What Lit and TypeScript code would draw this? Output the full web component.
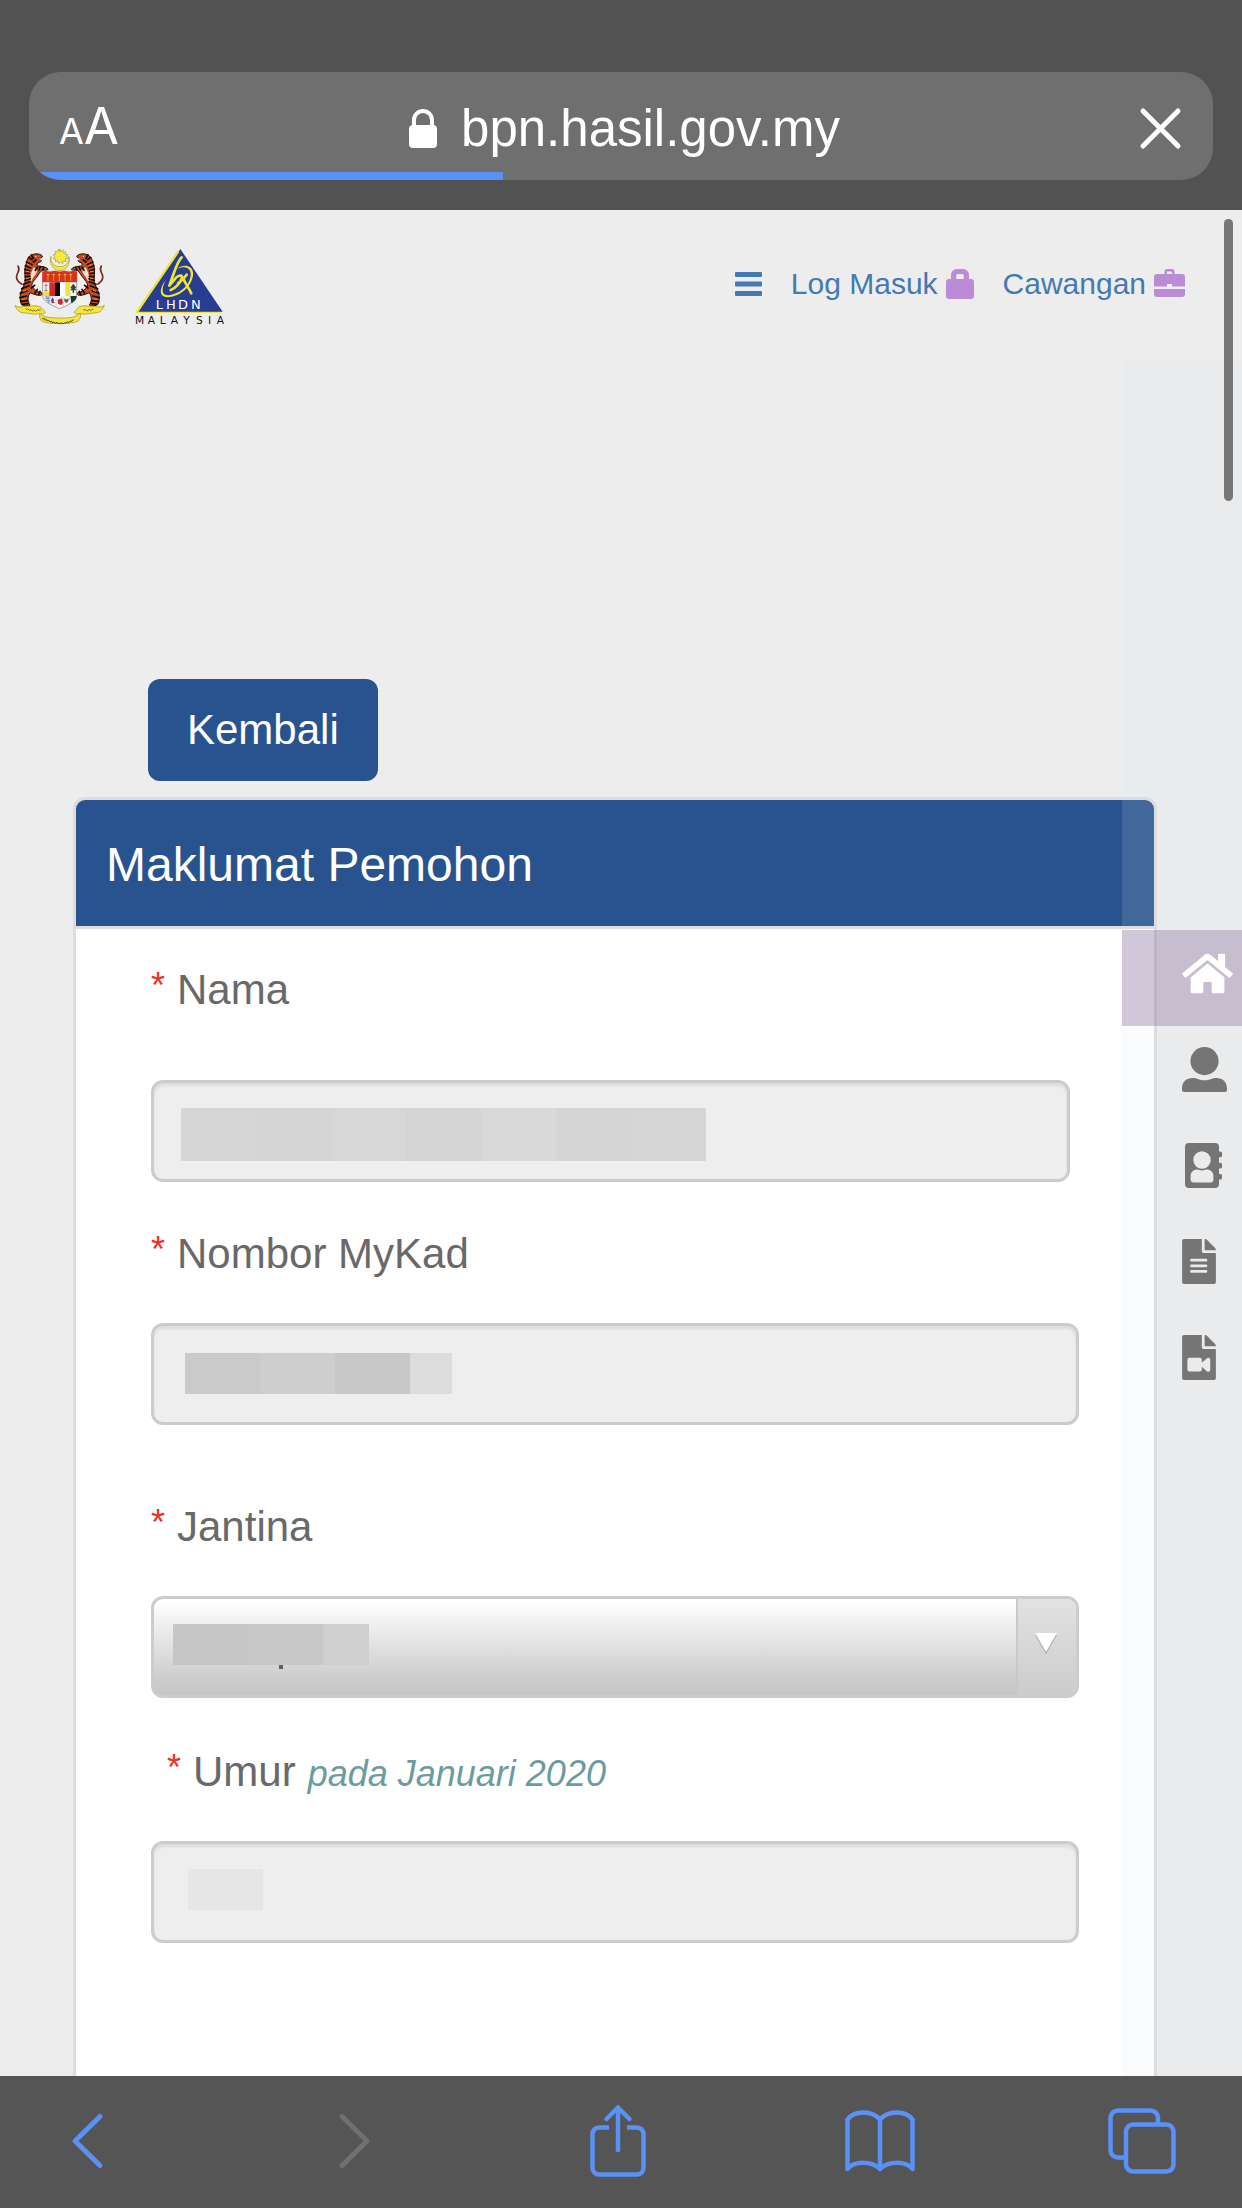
import { LitElement, html, svg, css, nothing } from "lit";
import { customElement } from "lit/decorators.js";
import { styleMap } from "lit/directives/style-map.js";

interface Mask {
  left: number;
  top: number;
  height: number;
  cells: [number, string][];
}

interface Field {
  id: string;
  label: string;
  note?: string;
  kind: "text" | "select";
  variant: string;
  mask: Mask;
}

const FIELDS: Field[] = [
  {
    id: "nama",
    label: "Nama",
    kind: "text",
    variant: "first",
    mask: {
      left: 30,
      top: 28,
      height: 53,
      cells: [
        [75, "#d6d6d6"],
        [75, "#d5d5d5"],
        [75, "#d7d7d7"],
        [75, "#d4d4d4"],
        [75, "#d9d9d9"],
        [75, "#d5d5d5"],
        [75, "#d6d6d6"],
      ],
    },
  },
  {
    id: "mykad",
    label: "Nombor MyKad",
    kind: "text",
    variant: "",
    mask: {
      left: 34,
      top: 30,
      height: 41,
      cells: [
        [75, "#cacaca"],
        [75, "#cecece"],
        [75, "#c8c8c8"],
        [42, "#dcdcdc"],
      ],
    },
  },
  {
    id: "jantina",
    label: "Jantina",
    kind: "select",
    variant: "roomy",
    mask: {
      left: 22,
      top: 28,
      height: 41,
      cells: [
        [75, "#c6c6c6"],
        [75, "#c8c8c8"],
        [46, "#cfcfcf"],
      ],
    },
  },
  {
    id: "umur",
    label: "Umur",
    note: "pada Januari 2020",
    kind: "text",
    variant: "indented",
    mask: { left: 37, top: 28, height: 41, cells: [[75, "#e6e6e6"]] },
  },
];

const FILE_SHAPE =
  "M224 136V0H24C10.7 0 0 10.7 0 24v464c0 13.3 10.7 24 24 24h336c13.3 0 24-10.7 24-24V160H248c-13.2 0-24-10.8-24-24zM256 0v128h128v-6c0-6-3-13-7-17L279 7c-4-4-11-7-17-7z";

const homeIcon = html`<svg width="51" height="45" viewBox="0 0 576 512" aria-hidden="true" fill="#fff">
  <path d="M280.37 148.26L96 300.11V464a16 16 0 0 0 16 16l112.06-.29a16 16 0 0 0 15.92-16V368a16 16 0 0 1 16-16h64a16 16 0 0 1 16 16v95.64a16 16 0 0 0 16 16.05L464 480a16 16 0 0 0 16-16V300L295.67 148.26a12.19 12.19 0 0 0-15.3 0zM571.6 251.47L488 182.56V44.05a12 12 0 0 0-12-12h-56a12 12 0 0 0-12 12v72.61L318.47 43a48 48 0 0 0-61 0L4.34 251.47a12 12 0 0 0-1.6 16.9l25.5 31A12 12 0 0 0 45.15 301l235.22-193.74a12.19 12.19 0 0 1 15.3 0L530.9 301a12 12 0 0 0 16.9-1.6l25.5-31a12 12 0 0 0-1.7-16.93z"/>
</svg>`;

const userIcon = html`<svg width="45" height="45" viewBox="0 0 45 45" aria-hidden="true" fill="#757575">
  <circle cx="22.5" cy="14.1" r="14.1"/>
  <path d="M0 41.5C0 35 4.5 31 10.5 31c5 0 6.5 2.3 12 2.3S29.500 31 34.500 31C40.500 31 45 35 45 41.500V43a2 2 0 0 1-2 2H2a2 2 0 0 1-2-2z"/>
</svg>`;

const contactIcon = html`<svg width="37" height="45" viewBox="0 0 37 45" aria-hidden="true" fill="#757575" fill-rule="evenodd">
  <path d="M4 0h26a4 4 0 0 1 4 4v4.500h1.500a1.500 1.500 0 0 1 1.500 1.500v2.700a1.500 1.500 0 0 1-1.500 1.500H34v5.500h1.500a1.500 1.500 0 0 1 1.500 1.500v2.700a1.500 1.500 0 0 1-1.500 1.500H34v5.500h1.500a1.500 1.500 0 0 1 1.500 1.500v2.700a1.500 1.500 0 0 1-1.500 1.500H34V41a4 4 0 0 1-4 4H4a4 4 0 0 1-4-4V4a4 4 0 0 1 4-4zM17 8.300a8.700 8.700 0 1 0 0 17.400a8.700 8.700 0 1 0 0-17.400zM5.600 36.500a3 3 0 0 0 3 3h16.800a3 3 0 0 0 3-3v-3.500c0-4-3-6.500-6.500-6.500c-2 0-2.500 1-4.900 1s-3-1-4.900-1c-3.500 0-6.500 2.500-6.500 6.500z"/>
</svg>`;

const fileIcon = html`<svg width="34" height="45" viewBox="0 0 384 512" aria-hidden="true" fill="#757575" fill-rule="evenodd">
  <path d="${FILE_SHAPE}M104 226h170a12 12 0 0 1 12 12v6a12 12 0 0 1-12 12H104a12 12 0 0 1-12-12v-6a12 12 0 0 1 12-12zM104 290h170a12 12 0 0 1 12 12v6a12 12 0 0 1-12 12H104a12 12 0 0 1-12-12v-6a12 12 0 0 1 12-12zM104 354h170a12 12 0 0 1 12 12v6a12 12 0 0 1-12 12H104a12 12 0 0 1-12-12v-6a12 12 0 0 1 12-12z"/>
</svg>`;

const videoIcon = html`<svg width="34" height="45" viewBox="0 0 384 512" aria-hidden="true" fill="#757575" fill-rule="evenodd">
  <path d="${FILE_SHAPE}M84 260h116a24 24 0 0 1 24 24v32l56-50c16-14 40-6 40 16v114c0 22-24 30-40 16l-56-50v30a24 24 0 0 1-24 24H84a24 24 0 0 1-24-24V284a24 24 0 0 1 24-24z"/>
</svg>`;

const tiger = svg`
  <path d="M64 162C53 155 47 144 51 134S61 120 54 108" fill="none" stroke="#7b2a1c" stroke-width="5" stroke-linecap="round"/>
  <path d="M96 126C90 140 90 152 96 162L118 192C110 206 98 210 92 222L118 227C130 220 132 206 130 196V140L118 128Z" fill="#f3f1ee"/>
  <path d="M80 96C82 82 92 74 104 72C114 70 125 74 128 79L124 84L118 86L124 92C122 97 115 97 112 100C110 106 114 109 122 109C132 110 142 113 144 118C141 122 133 120 127 121C120 124 116 134 110 142C100 154 94 160 96 168C102 180 112 186 125 188C128 192 126 196 119 196C108 196 98 192 91 188C82 198 82 214 90 225C82 230 70 228 64 222C57 206 60 186 71 168C80 152 72 132 75 114Z" fill="#c44a22" stroke="#1d100d" stroke-width="3"/>
  <path d="M101 112C110 116 114 122 108 131C102 139 96 147 93 156C89 146 90 132 96 122Z" fill="#f3dccb"/>
  <path d="M79 96l17 8M76 107l16 7M75 118l14 5M75 129l14 2M76 140l14-1M75 151l16-5M70 163l20-8M65 176l22-9M61 190l20-8M60 203l20-5M62 214l20-2M66 223l18-2M94 75l6 10M86 82l10 7M108 90l-8 6M112 112l-6 9M121 110l-4 10M131 112l-3 8M104 166l-10 8M112 178l-7 11M120 184l-4 10" stroke="#150b09" stroke-width="5" stroke-linecap="round" fill="none"/>
  <path d="M82 102l10 5M79 124l9 1M79 146l9-2M70 184l10-4M66 208l10-1" stroke="#f0923c" stroke-width="3" fill="none"/>
  <circle cx="108" cy="79" r="2" fill="#f4e6c8"/>
  <path d="M118 87l6 0" stroke="#fff" stroke-width="3"/>
  <path d="M45 226C56 235 68 229 80 229C94 230 104 224 120 230C126 234 128 240 136 246C132 256 124 250 116 251C100 256 84 248 66 248C58 246 50 240 45 226Z" fill="#f5e63c" stroke="#9b8d20" stroke-width="2"/>
`;

const coatOfArms = html`<svg class="logo" viewBox="45 57 270 225" role="img" aria-label="Jata Negara Malaysia">
  <path d="M179 57l4 8 6-6 1 9 8-3-3 8 9 1-6 6 6 5-8 2 2 8-8-2-2 8-6-6-5 6-3-8-8 2 1-8-8-2 6-6-6-5 8-2-2-8 8 2 2-8 5 6z" fill="#f7ea3f" stroke="#8b8020" stroke-width="1.500"/>
  <path d="M153 79C146 96 158 122 180 122S213 96 206 79C209 98 196 110 180 110S150 98 153 79z" fill="#f5e63c" stroke="#8b8020" stroke-width="1.500"/>
  ${tiger}
  <g transform="translate(358 0) scale(-1 1)">${tiger}</g>
  <path d="M128 124H230V196C230 214 204 226 179 236C154 226 128 214 128 196z" fill="#f4f4f4" stroke="#777" stroke-width="2"/>
  <path d="M127 126L138 122 150 126 164 122 179 126 194 122 208 126 220 122 231 126V157H127z" fill="#dc2f20"/>
  <path d="M144 131v22M161 131v22M178 131v22M195 131v22M212 131v22" stroke="#c9a12a" stroke-width="3"/>
  <path d="M140 134h8M157 134h8M174 134h8M191 134h8M208 134h8" stroke="#f2d23a" stroke-width="2.500"/>
  <path d="M129 186h19v12h-19z" fill="#f0dc36"/>
  <path d="M138 163v20M133 167q5-6 10 0M133 182h10" stroke="#555" stroke-width="2" fill="none"/>
  <path d="M148 157h17v41h-17z" fill="#d92a22"/>
  <path d="M165 157h15v41h-15z" fill="#0c0c0c"/>
  <path d="M180 157h16v41h-16z" fill="#fff"/>
  <path d="M196 157h15v41h-15z" fill="#f4e43a"/>
  <path d="M220 161l9 12-4 1 4 7h-18l4-7-4-1zM218 180h4v9h-4z" fill="#1d5138"/>
  <path d="M211 198H230C230 207 224 214 214 220z" fill="#173b33"/>
  <path d="M135 201h14M137 206h12M140 211h9M143 216h7" stroke="#3a5fb0" stroke-width="2.500"/>
  <path d="M150 198v25M168 198v33M190 198v33M210 198v22" stroke="#bbb" stroke-width="1.500"/>
  <path d="M158 202l4 8-1 8h-6l-2-7z" fill="#3d559c"/>
  <path d="M155 218h9" stroke="#c03030" stroke-width="3"/>
  <path d="M173 209l13-4 3 13-5 7-10-3z" fill="#cf2a2a"/>
  <path d="M193 206l6 3 6-3-1 8-5 5-5-5z" fill="#6b6338" stroke="#333" stroke-width="1"/>
  <path d="M120 250C128 262 150 263 179 264S230 262 240 249C244 258 240 268 233 274C214 283 144 283 126 274C119 268 117 258 120 250z" fill="#f5e63c" stroke="#9b8d20" stroke-width="2"/>
  <path d="M127 264c3 8 6-4 8 4s5-3 7 3 4-4 7 3 5-5 7 2 5-4 8 2 6-5 8 1 4-4 7 1 5-6 8 0 5-5 8-1 6-7 9-2 4-6 8-3 5-6 8-5" fill="none" stroke="#3a3512" stroke-width="3"/>
  <path d="M77 236c4 6 6-3 9 3s6-4 9 2 5-5 9 1 6-5 10-2 5-3 8 0M250 239c4 5 6-4 9 2s7-6 10-1 7-5 11-2" fill="none" stroke="#6b611c" stroke-width="3"/>
</svg>`;

const lhdnLogo = html`<svg class="logo" viewBox="405 57 270 225" role="img" aria-label="LHDN Malaysia">
  <path d="M536 64L406 249H660L664 243H420L540 70z" fill="#f0e436"/>
  <path d="M541 57L668 245H415z" fill="#283c92"/>
  <path d="M533 61L406 247H414L538 66z" fill="#f0e436"/>
  <path d="M498 150C484 166 478 184 486 196C500 210 544 196 564 170C586 142 584 112 562 108C550 106 540 110 532 116C546 110 562 108 570 122C578 142 562 172 536 186C512 198 490 200 488 184C487 172 492 160 498 150z" fill="#f0e436"/>
  <path d="M545 82C532 92 524 124 508 167L524 148C530 138 548 132 546 142C542 158 528 174 512 180M534 160C548 150 556 140 560 134M550 146C556 160 566 174 574 190" fill="none" stroke="#f0e436" stroke-width="8" stroke-linecap="round" stroke-linejoin="round"/>
  <text class="logo-mark" y="236" x="467 498 534 573">LHDN</text>
  <text class="logo-country" y="281" x="405 443 479 512 550 588 624 650">MALAYSIA</text>
</svg>`;

@customElement("app-root")
export class AppRoot extends LitElement {
  static styles = css`
    :host {
      display: flex;
      flex-direction: column;
      min-height: 100vh;
      background: #ededed;
      font-family: "Liberation Sans", Arial, sans-serif;
      color: #696969;
    }
    *,
    *::before,
    *::after {
      box-sizing: border-box;
    }
    svg {
      display: block;
      flex: none;
      overflow: visible;
    }
    button,
    input,
    select {
      font: inherit;
      margin: 0;
    }
    button {
      border: 0;
      background: none;
      padding: 0;
      color: inherit;
    }
    .browser-top {
      background: #525252;
      padding: 72px 29px 30px;
    }
    .address-bar {
      position: relative;
      display: grid;
      grid-template-columns: 1fr auto 1fr;
      align-items: center;
      height: 108px;
      padding: 5px 32px 0 30px;
      border-radius: 32px;
      background: #6f6f6f;
      color: #fff;
      overflow: hidden;
      font-family: Inter, "Liberation Sans", sans-serif;
    }
    .text-size {
      justify-self: start;
      font-size: 36px;
      line-height: 60px;
    }
    .text-size .big {
      font-size: 51px;
    }
    .address {
      display: flex;
      align-items: center;
      gap: 24px;
      padding-left: 9px;
      font-family: "Liberation Sans", Arial, sans-serif;
      font-size: 51px;
      line-height: 60px;
    }
    .stop {
      justify-self: end;
    }
    .progress {
      position: absolute;
      left: 0;
      bottom: 0;
      width: 40%;
      height: 8px;
      background: #5a91f7;
    }
    .page {
      position: relative;
      flex: 1;
      display: flex;
      flex-direction: column;
    }
    .site-header {
      display: flex;
      justify-content: space-between;
      align-items: flex-start;
      padding: 39px 57px 0 15px;
    }
    .logos {
      display: flex;
      gap: 30px;
    }
    .logo {
      width: 90px;
      height: 75px;
    }
    .logo-mark {
      font-family: "DejaVu Sans", sans-serif;
      font-size: 39px;
      fill: #fff;
    }
    .logo-country {
      font-family: "DejaVu Sans", sans-serif;
      font-size: 32px;
      fill: #111;
    }
    .site-nav {
      display: flex;
      align-items: center;
      gap: 29px;
      padding-top: 17px;
      font-size: 30px;
      line-height: 36px;
    }
    .nav-link {
      display: flex;
      align-items: center;
      gap: 8px;
      color: #4479b2;
      text-decoration: none;
    }
    .content {
      flex: 1;
      display: flex;
      flex-direction: column;
      align-items: flex-start;
      padding: 355px 85px 0 73px;
    }
    .back {
      height: 102px;
      margin: 0 75px 16px;
      padding: 0 39px;
      border-radius: 12px;
      background: #29538f;
      color: #fff;
      font-size: 42px;
      line-height: 60px;
    }
    .panel {
      flex: 1;
      align-self: stretch;
      border: 3px solid #ddd;
      border-bottom: 0;
      border-radius: 12px 12px 0 0;
      background: #fff;
    }
    .panel-title {
      margin: 0;
      padding: 35px 30px 31px;
      border-bottom: 3px solid #ddd;
      border-radius: 9px 9px 0 0;
      background: #29538f;
      background-clip: padding-box;
      color: #fff;
      font-size: 48px;
      font-weight: 400;
      line-height: 60px;
    }
    .form {
      display: flex;
      flex-direction: column;
      padding: 31px 75px 60px;
    }
    .field {
      display: flex;
      flex-direction: column;
      gap: 39px;
      padding-top: 42px;
    }
    .field.first {
      gap: 60px;
      padding-top: 0;
      padding-right: 9px;
    }
    .field.roomy {
      padding-top: 72px;
    }
    .field.indented {
      padding-top: 44px;
    }
    .label {
      display: flex;
      align-items: baseline;
      gap: 12px;
      height: 60px;
      font-size: 42px;
      line-height: 60px;
    }
    .indented .label {
      padding-left: 16px;
    }
    .required {
      align-self: flex-start;
      width: 14px;
      color: #e93323;
      font-size: 36px;
      line-height: 52px;
    }
    .note {
      color: #6b9c9d;
      font-size: 36px;
      font-style: italic;
    }
    .control {
      position: relative;
      display: flex;
      height: 102px;
    }
    .input,
    .select {
      flex: 1;
      min-width: 0;
      padding: 0 36px;
      border: 3px solid #ccc;
      border-radius: 12px;
      background: #eee;
      box-shadow: inset 0 3px 3px rgba(0, 0, 0, 0.075);
      color: #555;
      font-size: 42px;
      outline: 0;
    }
    .select {
      appearance: none;
      background: linear-gradient(#fff 4%, #eee 28%, #ccc 84%, #c6c6c6);
      box-shadow: none;
    }
    .arrow {
      position: absolute;
      top: 3px;
      right: 3px;
      bottom: 3px;
      width: 60px;
      display: flex;
      justify-content: center;
      padding: 34px 2px 0 0;
      border-left: 2px solid #c9c9c9;
      border-radius: 0 9px 9px 0;
      background: linear-gradient(#e2e2e2, #ccc);
      pointer-events: none;
    }
    .mask {
      position: absolute;
      display: flex;
      pointer-events: none;
    }
    .descender {
      position: absolute;
      left: 106px;
      top: 100%;
      width: 4px;
      height: 4px;
      background: #606060;
    }
    .side-nav {
      position: absolute;
      top: 150px;
      right: 0;
      bottom: 0;
      width: 120px;
      display: flex;
      flex-direction: column;
      padding-top: 570px;
      background: rgba(220, 225, 235, 0.14);
    }
    .side-link {
      display: flex;
      align-items: flex-start;
      height: 96px;
      padding: 21px 0 0 60px;
    }
    .side-link.inset {
      padding-left: 63px;
    }
    .side-link.active {
      background: rgba(117, 87, 139, 0.3);
    }
    .scroll-thumb {
      position: absolute;
      top: 9px;
      right: 9px;
      width: 9px;
      height: 282px;
      border-radius: 5px;
      background: #777;
    }
    .browser-bottom {
      display: flex;
      justify-content: space-between;
      align-items: center;
      height: 132px;
      padding: 0 78px 2px 71px;
      background: #555;
    }
    .tool {
      display: flex;
      justify-content: center;
      width: 44px;
    }
    .tool.start {
      justify-content: flex-start;
    }
  `;

  private renderControl(f: Field) {
    if (f.kind === "select") {
      return html`<select class="select" id=${f.id}>
          <option></option>
        </select>
        <span class="arrow" aria-hidden="true">
          <svg width="22" height="22" viewBox="0 0 22 22">
            <path d="M0 2H22L11 21z" fill="#aaa" />
            <path d="M0 0H22L11 19z" fill="#fff" />
          </svg>
        </span>`;
    }
    return html`<input class="input" id=${f.id} type="text" readonly />`;
  }

  private renderField(f: Field) {
    const { left, top, height, cells } = f.mask;
    return html`<div class="field ${f.variant}">
      <label class="label" for=${f.id}>
        <span class="required">*</span>
        <span>${f.label}</span>
        ${f.note ? html`<span class="note">${f.note}</span>` : nothing}
      </label>
      <div class="control">
        ${this.renderControl(f)}
        <span
          class="mask"
          aria-hidden="true"
          style=${styleMap({ left: `${left}px`, top: `${top}px`, height: `${height}px` })}
        >
          ${cells.map(
            ([width, background]) => html`<span style=${styleMap({ width: `${width}px`, background })}></span>`
          )}
          ${f.kind === "select" ? html`<span class="descender"></span>` : nothing}
        </span>
      </div>
    </div>`;
  }

  render() {
    return html`
      <header class="browser-top">
        <div class="address-bar">
          <button class="text-size" aria-label="Saiz teks">A<span class="big">A</span></button>
          <button class="address">
            <svg width="28" height="40" viewBox="0 0 28 40" aria-hidden="true">
              <rect x="0" y="16" width="28" height="23" rx="4" fill="#fff" />
              <path d="M5 18V11a9 9 0 0 1 18 0v7" fill="none" stroke="#fff" stroke-width="4" />
            </svg>
            bpn.hasil.gov.my
          </button>
          <button class="stop" aria-label="Henti">
            <svg width="41" height="41" viewBox="0 0 41 41" fill="none" stroke="#fff" stroke-width="5" stroke-linecap="round">
              <path d="M3 3L38 38M38 3L3 38" />
            </svg>
          </button>
          <div class="progress"></div>
        </div>
      </header>

      <div class="page">
        <header class="site-header">
          <div class="logos">${coatOfArms}${lhdnLogo}</div>
          <nav class="site-nav">
            <a class="nav-link" href="#menu" aria-label="Menu">
              <svg width="27" height="24" viewBox="0 0 27 24" fill="#4479b2">
                <rect width="27" height="5" rx="1" />
                <rect y="9.500" width="27" height="5" rx="1" />
                <rect y="19" width="27" height="5" rx="1" />
              </svg>
            </a>
            <a class="nav-link" href="#log-masuk"
              >Log Masuk
              <svg width="28" height="30" viewBox="0 0 28 30" fill="#bb8cd5" fill-rule="evenodd" aria-hidden="true">
                <path d="M5 10V6a6 6 0 0 1 6-6h6a6 6 0 0 1 6 6v4h2a3 3 0 0 1 3 3v14a3 3 0 0 1-3 3H3a3 3 0 0 1-3-3V13a3 3 0 0 1 3-3zM10.200 10h7.600V6.500a1.500 1.500 0 0 0-1.500-1.500h-4.600a1.500 1.500 0 0 0-1.500 1.500z" />
              </svg>
            </a>
            <a class="nav-link" href="#cawangan"
              >Cawangan
              <svg width="31" height="30" viewBox="0 0 31 30" fill="#bb8cd5" fill-rule="evenodd" aria-hidden="true">
                <path d="M10.500 5V2.500a2.500 2.500 0 0 1 2.500-2.500h5a2.500 2.500 0 0 1 2.500 2.500V5H28a3 3 0 0 1 3 3v9.500H18V15h-5v2.500H0V8a3 3 0 0 1 3-3zM13 5h5V2.500h-5zM0 20h31v5a3 3 0 0 1-3 3H3a3 3 0 0 1-3-3z" />
              </svg>
            </a>
          </nav>
        </header>

        <main class="content">
          <button class="back">Kembali</button>
          <section class="panel">
            <h1 class="panel-title">Maklumat Pemohon</h1>
            <form class="form">${FIELDS.map((f) => this.renderField(f))}</form>
          </section>
        </main>

        <nav class="side-nav">
          <a class="side-link active" href="#utama" aria-label="Utama">${homeIcon}</a>
          <a class="side-link" href="#profil" aria-label="Profil">${userIcon}</a>
          <a class="side-link inset" href="#hubungi" aria-label="Hubungi">${contactIcon}</a>
          <a class="side-link" href="#dokumen" aria-label="Dokumen">${fileIcon}</a>
          <a class="side-link" href="#video" aria-label="Video">${videoIcon}</a>
        </nav>
        <div class="scroll-thumb"></div>
      </div>

      <footer class="browser-bottom">
        <button class="tool start" aria-label="Kembali">
          <svg width="32" height="54" viewBox="0 0 32 54" fill="none" stroke="#5a91f7" stroke-width="5" stroke-linecap="round" stroke-linejoin="round">
            <path d="M29 2.500L4 27L29 51.500" />
          </svg>
        </button>
        <button class="tool" aria-label="Hadapan" disabled>
          <svg width="32" height="54" viewBox="0 0 32 54" fill="none" stroke="#707070" stroke-width="5" stroke-linecap="round" stroke-linejoin="round">
            <path d="M3 2.500L28 27L3 51.500" />
          </svg>
        </button>
        <button class="tool" aria-label="Kongsi">
          <svg width="56" height="72" viewBox="0 0 56 72" fill="none" stroke="#5a91f7" stroke-width="4.500">
            <path d="M19 22.500H9a6.500 6.500 0 0 0-6.500 6.500V63a6.500 6.500 0 0 0 6.500 6.500H47a6.500 6.500 0 0 0 6.500-6.500V29a6.500 6.500 0 0 0-6.500-6.500H37" />
            <path d="M28 45V3M16.500 14L28 2.500L39.500 14" stroke-linecap="round" stroke-linejoin="round" />
          </svg>
        </button>
        <button class="tool" aria-label="Penanda buku">
          <svg width="72" height="62" viewBox="0 0 72 62" fill="none" stroke="#5a91f7" stroke-width="4.500" stroke-linecap="round" stroke-linejoin="round">
            <path d="M36 9.500C28 0 10 0 3.500 9.500V59C10 50.500 28 50.500 36 59C44 50.500 62 50.500 68.500 59V9.500C62 0 44 0 36 9.500zV59" />
          </svg>
        </button>
        <button class="tool" aria-label="Tab">
          <svg width="68" height="66" viewBox="0 0 68 66" fill="none" stroke="#5a91f7" stroke-width="4.500">
            <rect x="18" y="16.500" width="47.500" height="47" rx="7" />
            <path d="M18 49.500H10a7.500 7.500 0 0 1-7.500-7.500V10A7.500 7.500 0 0 1 10 2.500H42.500A7.500 7.500 0 0 1 50 10V16.500" />
          </svg>
        </button>
      </footer>
    `;
  }
}
